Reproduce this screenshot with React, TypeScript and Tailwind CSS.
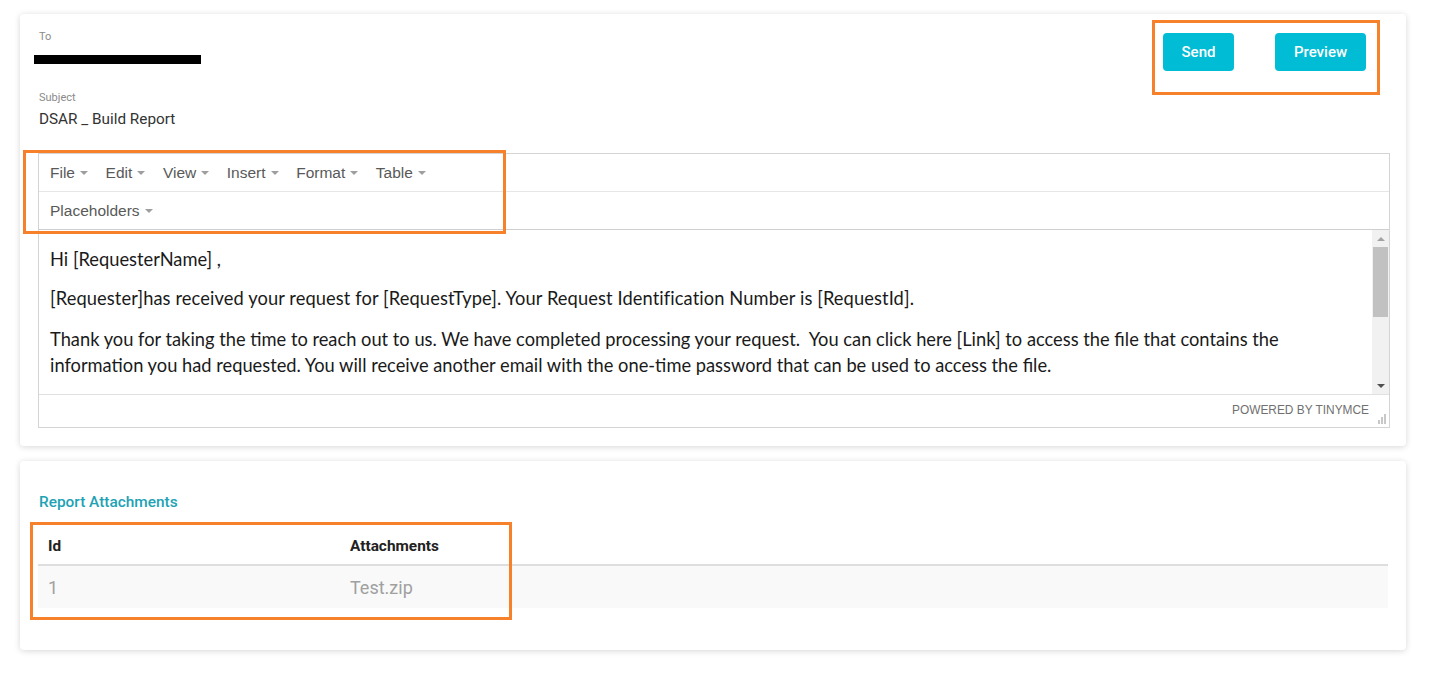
import React from "react"

const menus = ["File", "Edit", "View", "Insert", "Format", "Table"]

function Caret() {
  return <span className="ml-[5px] inline-block w-0 h-0 border-l-[4px] border-r-[4px] border-t-[4px] border-l-transparent border-r-transparent border-t-[#9e9e9e] align-middle" />
}

function MenuItem({ label }: { label: string }) {
  return (
    <div className="flex items-center text-[15.5px] text-[#595959] mr-[17.6px]">
      {label}
      <Caret />
    </div>
  )
}

function Scrollbar() {
  return (
    <div className="w-[17px] bg-[#f1f1f1] flex flex-col items-center">
      <div className="h-[17px] flex items-center justify-center">
        <span className="w-0 h-0 border-l-[4px] border-r-[4px] border-b-[4px] border-l-transparent border-r-transparent border-b-[#a3a3a3]" />
      </div>
      <div className="w-[15px] h-[70px] bg-[#c1c1c1]" />
      <div className="flex-1" />
      <div className="h-[17px] flex items-center justify-center">
        <span className="w-0 h-0 border-l-[4px] border-r-[4px] border-t-[4px] border-l-transparent border-r-transparent border-t-[#505050]" />
      </div>
    </div>
  )
}

function Editor() {
  return (
    <div className="border border-[#d4d4d4] font-['Liberation_Sans',Arial,sans-serif]">
      <div className="h-[38px] flex items-center px-[11px] border-b border-[#e6e6e6]">
        {menus.map(m => <MenuItem key={m} label={m} />)}
      </div>
      <div className="h-[38px] flex items-center px-[11px] border-b border-[#cfcfcf]">
        <MenuItem label="Placeholders" />
      </div>
      <div className="h-[165px] flex border-b border-[#e0e0e0]">
        <div className="flex-1 pl-[11px] pt-[16px] font-['Lato','Open_Sans',sans-serif] text-[18.3px] text-[#1a1a1a] leading-[26px]">
          <p className="mb-[13px]">Hi [RequesterName] ,</p>
          <p className="mb-[15px] tracking-[0.1px]">[Requester]has received your request for [RequestType]. Your Request Identification Number is [RequestId].</p>
          <p className="whitespace-nowrap">
            Thank you for taking the time to reach out to us. We have completed processing your request.&nbsp; You can click here [Link] to access the file that contains the
            <br />
            information you had requested. You will receive another email with the one-time password that can be used to access the file.
          </p>
        </div>
        <Scrollbar />
      </div>
      <div className="h-[32px] flex items-center justify-end pr-[20px] relative">
        <span className="text-[11.9px] text-[#707070]">POWERED BY TINYMCE</span>
        <svg className="absolute right-[3px] bottom-[3px]" width="10" height="10" viewBox="0 0 10 10">
          <rect x="8" y="0" width="2" height="10" fill="#c8c8c8" />
          <rect x="5" y="3" width="2" height="7" fill="#c8c8c8" />
          <rect x="2" y="6" width="2" height="4" fill="#c8c8c8" />
        </svg>
      </div>
    </div>
  )
}

function Annotation({ className }: { className: string }) {
  return <div className={`absolute border-[3px] border-[#f7812b] pointer-events-none ${className}`} />
}

export default function App() {
  return (
    <div className="w-[1430px] h-[674px] bg-white font-['Roboto',sans-serif] pt-[14px] pl-[20px]">
      <div className="w-[1386px] relative bg-white rounded-[4px] shadow-[0_1px_6px_rgba(0,0,0,0.16)] pl-[18px] pr-[16px] pt-[16px] pb-[18px]">
        <div className="flex justify-between">
          <div>
            <div className="text-[11px] text-[#8a8a8a] leading-[13px] ml-[1px]">To</div>
            <div className="mt-[12px] h-[9px] w-[167px] bg-black -ml-[4px]" />
            <div className="mt-[27px] text-[11px] text-[#8a8a8a] leading-[13px] ml-[1px]">Subject</div>
            <div className="mt-[6px] text-[15.3px] text-[#333] leading-[18px] ml-[1px]">DSAR _ Build Report</div>
          </div>
          <div className="flex gap-[41px] pt-[3px] pr-[24px]">
            <button className="h-[38px] w-[71px] rounded-[4px] bg-[#00bcd4] text-white text-[15px] font-medium">Send</button>
            <button className="h-[38px] w-[91px] rounded-[4px] bg-[#00bcd4] text-white text-[15px] font-medium">Preview</button>
          </div>
        </div>
        <div className="mt-[25px]">
          <Editor />
        </div>
        <Annotation className="left-[1132px] top-[6px] w-[228px] h-[75px]" />
        <Annotation className="left-[3px] top-[136px] w-[483px] h-[84px]" />
      </div>

      <div className="mt-[15px] w-[1386px] h-[189px] relative bg-white rounded-[4px] shadow-[0_1px_6px_rgba(0,0,0,0.16)] pl-[18px] pr-[18px] pt-[30px]">
        <div className="text-[15.4px] font-medium text-[#1ea2b4] ml-[1px]">Report Attachments</div>
        <table className="mt-[14px] w-full border-collapse">
          <thead>
            <tr className="border-b-2 border-[#dedede]">
              <th className="w-[302px] h-[37px] text-left pl-[10px] text-[15.4px] font-bold text-[#222]">Id</th>
              <th className="text-left pl-[10px] text-[15.4px] font-bold text-[#222]">Attachments</th>
            </tr>
          </thead>
          <tbody>
            <tr className="bg-[#f9f9f9]">
              <td className="h-[43px] pl-[10px] text-[18px] text-[#a0a0a0]">1</td>
              <td className="pl-[10px] text-[18px] text-[#a0a0a0]">Test.zip</td>
            </tr>
          </tbody>
        </table>
        <Annotation className="left-[10px] top-[61px] w-[482px] h-[98px]" />
      </div>
    </div>
  )
}
